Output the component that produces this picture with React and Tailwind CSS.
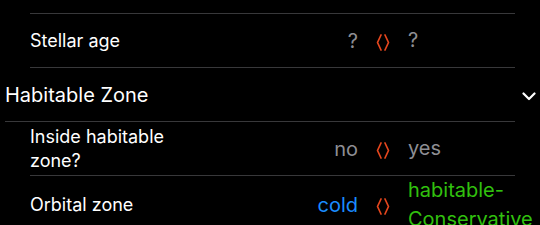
const rows = [
  { label: "Stellar age", left: "?", right: "?", leftColor: "text-[#8e8e93]", rightColor: "text-[#8e8e93]" },
];

function Brackets() {
  return (
    <svg width="14" height="17" viewBox="0 0 14 17" className="mt-[3px]" fill="none" stroke="#e5461d" strokeWidth="1.7" strokeLinecap="round" strokeLinejoin="round">
      <polyline points="5,1 1.5,8.5 5,16" />
      <polyline points="9,1 12.5,8.5 9,16" />
    </svg>
  );
}

function CompareRow({ label, left, right, leftColor, rightColor, last }) {
  return (
    <div className="flex items-center min-h-[54px] pl-[30px]">
      <div className={`flex flex-1 items-center self-stretch min-h-[54px] mr-[25px] ${last ? "" : "border-b border-[#38383a]"}`}>
        <div className="w-[160px] text-white text-[18px] leading-[24px]">{label}</div>
        <div className={`flex-1 text-right text-[20px] leading-[26px] ${leftColor}`}>{left}</div>
        <div className="w-[50px] flex justify-center">
          <Brackets />
        </div>
        <div className={`w-[132px] -mr-[25px] text-[20px] leading-[29px] ${rightColor}`}>{right}</div>
      </div>
    </div>
  );
}

export default function App() {
  return (
    <div className="w-[540px] h-[225px] overflow-hidden bg-black" style={{ fontFamily: "Inter, 'Noto Sans', sans-serif" }}>
      <div className="h-[14px] ml-[30px] mr-[25px] border-b border-[#38383a]" />
      {rows.map((r) => (
        <CompareRow key={r.label} {...r} />
      ))}
      <div className="flex items-center h-[54px] pl-[5px]">
        <div className="flex flex-1 items-center self-stretch border-b border-[#38383a] mr-[25px]">
          <span className="text-white text-[20px]">Habitable Zone</span>
        </div>
        <svg width="14" height="9" viewBox="0 0 14 9" className="mr-[4px] -ml-[18px] mt-[2px]" fill="none" stroke="white" strokeWidth="2.2" strokeLinecap="round" strokeLinejoin="round">
          <polyline points="1.5,1.5 7,7 12.5,1.5" />
        </svg>
      </div>
      <CompareRow label="Inside habitable zone?" left="no" right="yes" leftColor="text-[#8e8e93]" rightColor="text-[#8e8e93]" />
      <CompareRow label="Orbital zone" left="cold" right="habitable-Conservative" leftColor="text-[#1a8cff]" rightColor="text-[#31c10e]" last />
    </div>
  );
}
